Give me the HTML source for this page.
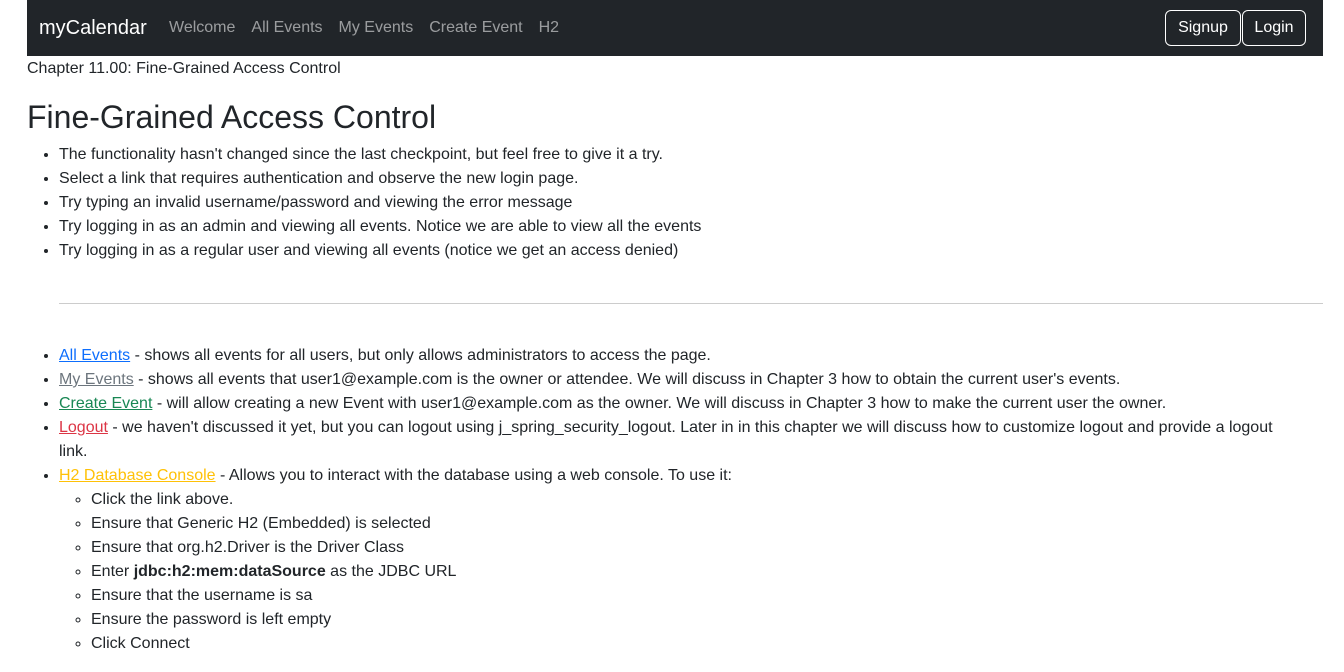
<!DOCTYPE html>
<html><head><meta charset="utf-8"><style>
body{margin:0;font-family:"Liberation Sans",Arial,sans-serif;font-size:16px;line-height:24px;color:#212529;background:#fff}
.nav{position:absolute;left:27px;top:0;width:1296px;height:56px;background:#212529}
.brand{position:absolute;left:12px;top:14px;font-size:20px;line-height:28px;color:#fff}
.links{position:absolute;left:142px;top:16px;color:rgba(255,255,255,.55)}
.links span{margin-right:16px}
.btn{position:absolute;top:10px;height:34px;border:1px solid #fff;border-radius:6px;color:#fff;line-height:34px;text-align:center}
.wrap{position:absolute;left:27px;top:57px;width:1280px}
h1{font-size:32px;line-height:38px;font-weight:500;margin:17px 0 7px}
ul{margin:0;padding-left:32px}
ul ul{list-style:circle}
hr{margin:40px -16px 40px 32px;border:0;border-top:1px solid #ccc}
a{text-decoration:underline}
</style></head><body>
<div class="nav"><div class="brand">myCalendar</div>
<div class="links"><span>Welcome</span><span>All Events</span><span>My Events</span><span>Create Event</span><span>H2</span></div>
<div class="btn" style="left:1138px;width:74px">Signup</div>
<div class="btn" style="left:1215px;width:62px">Login</div></div>
<div class="wrap">
<div>Chapter 11.00: Fine-Grained Access Control</div>
<h1>Fine-Grained Access Control</h1>
<ul>
<li>The functionality hasn't changed since the last checkpoint, but feel free to give it a try.</li>
<li>Select a link that requires authentication and observe the new login page.</li>
<li>Try typing an invalid username/password and viewing the error message</li>
<li>Try logging in as an admin and viewing all events. Notice we are able to view all the events</li>
<li>Try logging in as a regular user and viewing all events (notice we get an access denied)</li>
</ul>
<hr>
<ul>
<li><a style="color:#0d6efd">All Events</a> - shows all events for all users, but only allows administrators to access the page.</li>
<li><a style="color:#6c757d">My Events</a> - shows all events that user1@example.com is the owner or attendee. We will discuss in Chapter 3 how to obtain the current user's events.</li>
<li><a style="color:#198754">Create Event</a> - will allow creating a new Event with user1@example.com as the owner. We will discuss in Chapter 3 how to make the current user the owner.</li>
<li><a style="color:#dc3545">Logout</a> - we haven't discussed it yet, but you can logout using j_spring_security_logout. Later in in this chapter we will discuss how to customize logout and provide a logout<br>link.</li>
<li><a style="color:#ffc107">H2 Database Console</a> - Allows you to interact with the database using a web console. To use it:
<ul>
<li>Click the link above.</li>
<li>Ensure that Generic H2 (Embedded) is selected</li>
<li>Ensure that org.h2.Driver is the Driver Class</li>
<li>Enter <b>jdbc:h2:mem:dataSource</b> as the JDBC URL</li>
<li>Ensure that the username is sa</li>
<li>Ensure the password is left empty</li>
<li>Click Connect</li>
</ul></li>
</ul>
</div>
</body></html>
